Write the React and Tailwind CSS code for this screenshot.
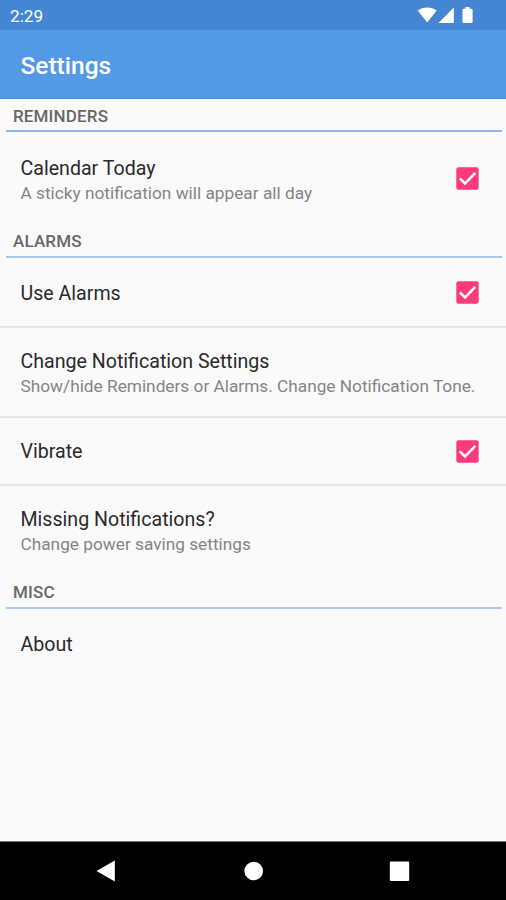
import React from "react";

function Section({ title, line = "bg-[#a9c6ec]", className = "", titleClass = "pt-1" }) {
  return (
    <div className={`flex flex-col justify-between pl-[6px] pr-1 ${className}`}>
      <h2 className={`pl-[7px] text-[17px] leading-[24px] font-medium tracking-[0.15px] text-[#686868] ${titleClass}`}>{title}</h2>
      <div className={`h-[2px] ${line}`} />
    </div>
  );
}

function Check() {
  return (
    <svg className="size-[23px] shrink-0" viewBox="0 0 23 23" fill="none">
      <rect x="0.3" y="0.3" width="22.4" height="22.4" rx="2.3" fill="#fd3a7d" />
      <path d="M3.8 11.4 9 16.5 19.3 5.9" stroke="#fff" strokeWidth="2.5" />
    </svg>
  );
}

function Row({ title, detail, checked, className = "", textClass = "" }) {
  return (
    <div className={`flex items-center justify-between pl-[20.5px] pr-[27px] ${className}`}>
      <div className={`whitespace-nowrap ${textClass}`}>
        <div className="text-[19.6px] leading-[25px] text-[#2a2a2a]">{title}</div>
        {detail && <div className="text-[17.25px] leading-[24px] text-[#858585]">{detail}</div>}
      </div>
      {checked && <Check />}
    </div>
  );
}

export default function App() {
  return (
    <div className="flex h-[900px] w-[506px] flex-col overflow-hidden bg-[#fafafa] font-[Roboto,sans-serif]">
      <div className="flex h-[30px] shrink-0 items-center justify-between bg-[#4586d2] pl-[10px] pr-[32px] text-white">
        <span className="text-[17.2px] leading-[20px] pt-px">2:29</span>
        <svg className="h-[20px] w-[58px]" viewBox="416 5 58 20" fill="#fff">
          <path d="M417.7 10.6C422.8 6.5 431.6 6.5 436.7 10.6L427.2 22.5Z" />
          <path d="M438.5 23 453.8 7.5V23Z" />
          <path d="M465.3 7H469.7V8.7H471.4Q472.6 8.7 472.6 9.9V21.8Q472.6 23 471.4 23H463.7Q462.5 23 462.5 21.8V9.9Q462.5 8.7 463.7 8.7H465.3Z" />
        </svg>
      </div>
      <header className="flex h-[69px] shrink-0 items-center border-b border-[#4a8fdf] bg-[#5499e5] pl-[20.5px]">
        <h1 className="pt-[4px] text-[24.5px] leading-[30px] font-medium text-white">Settings</h1>
      </header>
      <main className="flex flex-1 flex-col">
        <Section title="REMINDERS" line="bg-[#8db6ef]" className="h-[33px]" titleClass="pt-[5px]" />
        <Row title="Calendar Today" detail="A sticky notification will appear all day" checked className="h-[93px]" textClass="pt-[4px]" />
        <Section title="ALARMS" className="h-[33px]" />
        <Row title="Use Alarms" checked className="h-[68px]" textClass="pt-[2px]" />
        <div className="h-[2px] bg-[#e6e6e6]" />
        <Row title="Change Notification Settings" detail="Show/hide Reminders or Alarms. Change Notification Tone." className="h-[88px]" textClass="pt-[3px]" />
        <div className="h-[2px] bg-[#e6e6e6]" />
        <Row title="Vibrate" checked className="h-[66px]" textClass="pt-px" />
        <div className="h-[2px] bg-[#e6e6e6]" />
        <Row title="Missing Notifications?" detail="Change power saving settings" className="h-[90px]" />
        <Section title="MISC" className="h-[33px]" />
        <Row title="About" className="h-[70px]" />
      </main>
      <nav className="h-[59px] shrink-0 border-t border-[#777] bg-black">
        <svg className="h-[58px] w-[506px]" viewBox="0 842 506 58" fill="#fff">
          <path d="M96.5 871 114.8 860.5V881.5Z" />
          <circle cx="253.7" cy="871" r="9.3" />
          <rect x="389.8" y="861.6" width="19.4" height="19.4" rx="1.2" />
        </svg>
      </nav>
    </div>
  );
}
